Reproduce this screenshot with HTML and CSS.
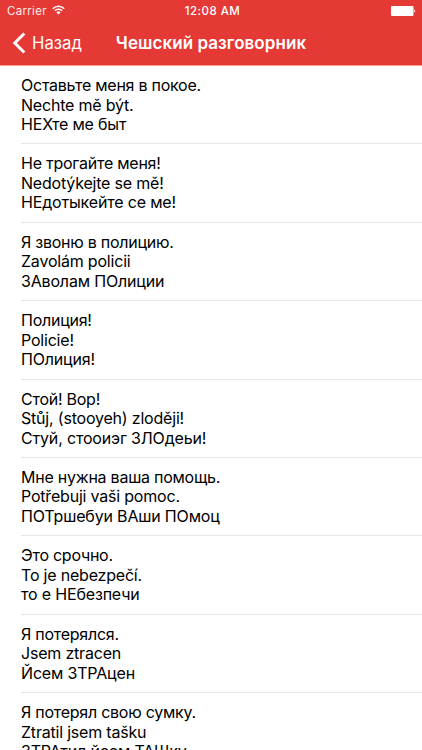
FILE: index.html
```html
<!DOCTYPE html>
<html lang="ru">
<head>
<meta charset="utf-8">
<title>Чешский разговорник</title>
<link rel="stylesheet" href="styles.css">
</head>
<body>
<header class="header">
  <div class="status">
    <div class="carrier"><span class="carrier-name">Carrier</span>
      <svg class="wifi" width="13" height="10" viewBox="0 0 13 10"><g fill="none" stroke="#fff" stroke-width="1.5"><path d="M.8 3.7a8.1 8.1 0 0 1 11.4 0"/><path d="M2.8 5.8a5.2 5.2 0 0 1 7.4 0"/></g><path fill="#fff" d="M4.4 7.4a3 3 0 0 1 4.2 0L6.5 9.6z"/></svg>
    </div>
    <span class="time">12:08 AM</span>
    <svg class="battery" width="25" height="10" viewBox="0 0 25 10" fill="#fff"><rect width="22.5" height="10" rx="1"/><path d="M23.3 3.3a2 2 0 0 1 0 3.4z"/></svg>
  </div>
  <nav class="nav">
    <a class="back"><svg width="14" height="22" viewBox="0 0 14 22"><path d="M12.3 1.5L2.8 11l9.5 9.5" fill="none" stroke="#fff" stroke-width="3"/></svg><span class="back-label">Назад</span></a>
    <h1 class="title">Чешский разговорник</h1>
  </nav>
</header>
<main class="list">
  <section class="row"><p class="ru">Оставьте меня в покое.</p><p class="cs">Nechte mě být.</p><p class="say">НЕХте ме быт</p></section>
  <section class="row"><p class="ru">Не трогайте меня!</p><p class="cs">Nedotýkejte se mě!</p><p class="say">НЕдотыкейте се ме!</p></section>
  <section class="row"><p class="ru">Я звоню в полицию.</p><p class="cs">Zavolám policii</p><p class="say">ЗАволам ПОлиции</p></section>
  <section class="row"><p class="ru">Полиция!</p><p class="cs">Policie!</p><p class="say">ПОлиция!</p></section>
  <section class="row"><p class="ru">Стой! Вор!</p><p class="cs">Stůj, (stooyeh) zloději!</p><p class="say">Стуй, стооиэг ЗЛОдеьи!</p></section>
  <section class="row"><p class="ru">Мне нужна ваша помощь.</p><p class="cs">Potřebuji vaši pomoc.</p><p class="say">ПОТршебуи ВАши ПОмоц</p></section>
  <section class="row"><p class="ru">Это срочно.</p><p class="cs">To je nebezpečí.</p><p class="say">то е НЕбезпечи</p></section>
  <section class="row"><p class="ru">Я потерялся.</p><p class="cs">Jsem ztracen</p><p class="say">Йсем ЗТРАцен</p></section>
  <section class="row"><p class="ru">Я потерял свою сумку.</p><p class="cs">Ztratil jsem tašku</p><p class="say">ЗТРАтил йсем ТАШку</p></section>
</main>
</body>
</html>
```
FILE: styles.css
```css
* { box-sizing: border-box; }
body { margin: 0; height: 750px; overflow: hidden; background: #fff; color: #000; font-family: Inter, sans-serif; display: flex; flex-direction: column; }
p, h1 { margin: 0; }
.header { flex: none; height: 66px; background: #e53935; color: #fff; border-bottom: 1px solid #ff9a97; }
.status { height: 22px; padding: 0 6px 0 7px; display: grid; grid-template-columns: 1fr auto 1fr; align-items: center; font-size: 11.5px; }
.carrier { display: flex; align-items: center; gap: 5px; letter-spacing: .3px; }
.carrier-name { opacity: .9; }
.wifi { margin-top: -2px; }
.time { font-weight: 500; letter-spacing: .5px; margin-left: 2px; }
.battery { justify-self: end; margin-top: -1px; }
.nav { height: 42px; display: grid; grid-template-columns: 1fr auto 1fr; align-items: center; padding: 0 12px; }
.back { display: flex; align-items: center; gap: 6px; font-size: 16.7px; }
.title { font-size: 17px; font-weight: 600; white-space: nowrap; letter-spacing: .06px; }
.list { flex: 1; min-height: 0; overflow: hidden; }
.row { height: 78.4px; margin-left: 21px; padding-top: 10px; border-bottom: 1px solid #e5e5e7; font-size: 16px; line-height: 19.5px; white-space: nowrap; }
.ru { letter-spacing: -.25px; }
.cs { letter-spacing: -.2px; }
.say { letter-spacing: -.17px; }
```
